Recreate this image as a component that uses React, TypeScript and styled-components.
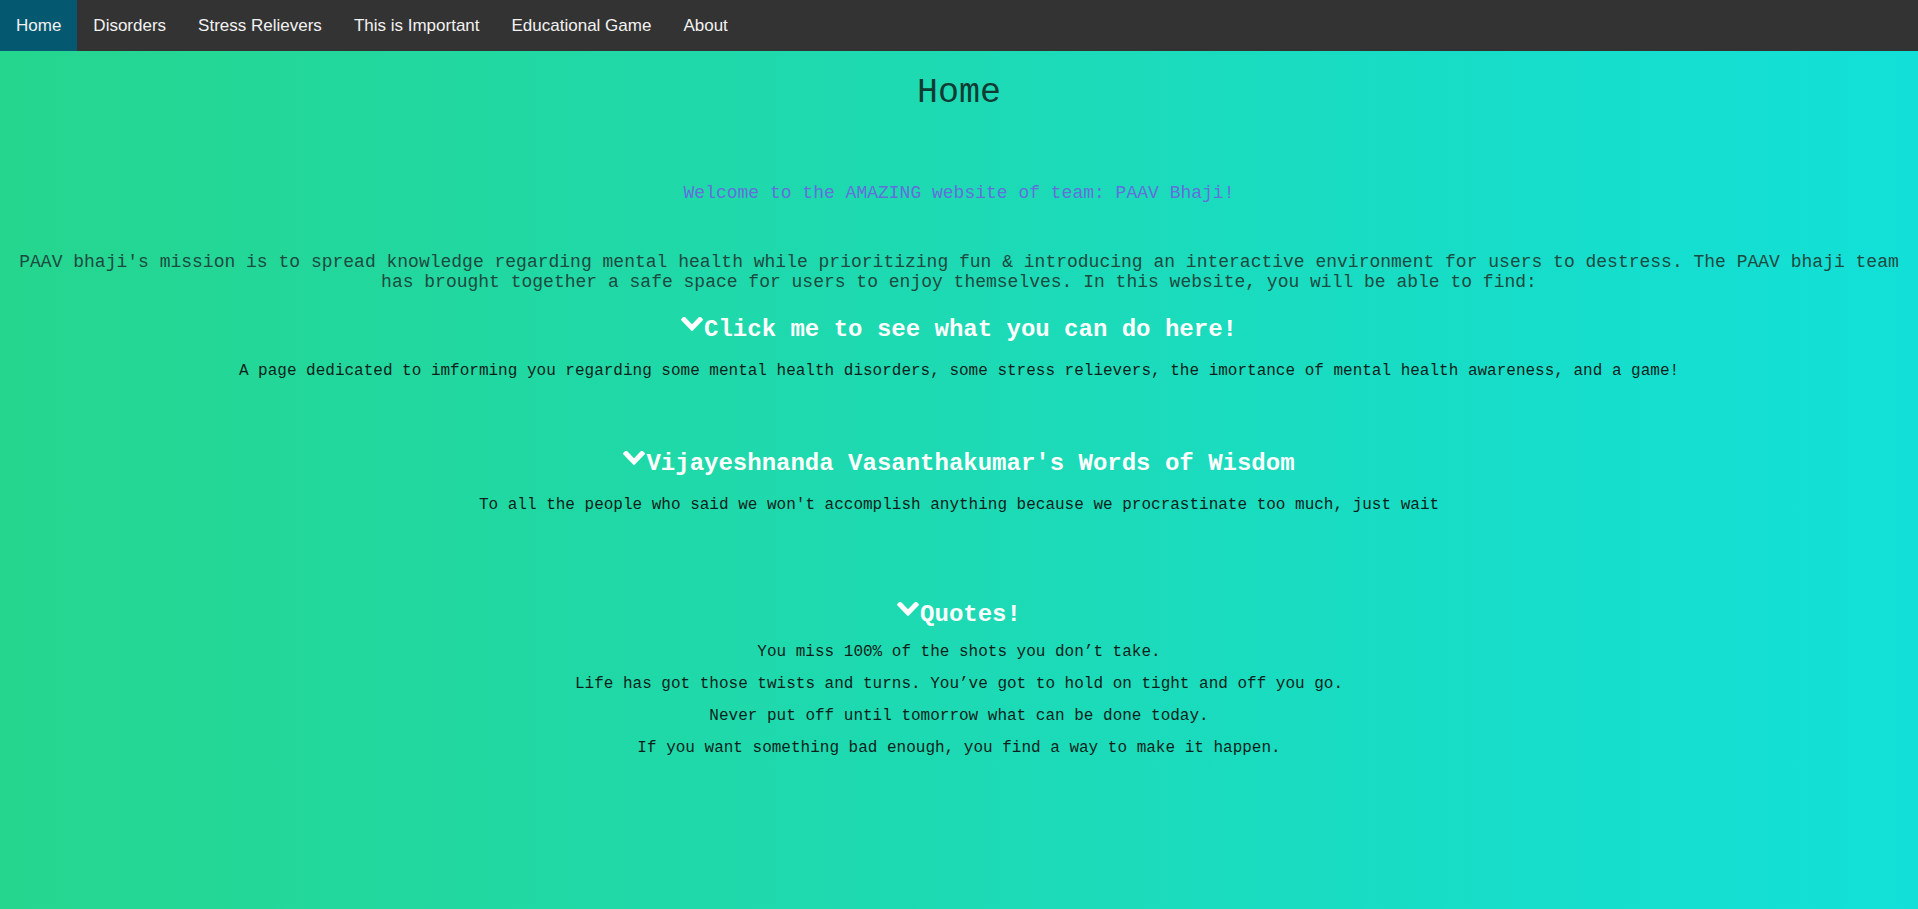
import React from "react";
import styled, { createGlobalStyle } from "styled-components";

const GlobalStyle = createGlobalStyle`
  html, body {
    margin: 0;
    padding: 0;
    min-height: 100%;
  }
  body {
    background: linear-gradient(to right, #25d68e 0%, #1ddab4 50%, #12e0d8 100%);
    min-height: 909px;
    font-family: "Liberation Mono", "Courier New", monospace;
  }
`;

const Page = styled.div`
  min-height: 909px;
  display: flex;
  flex-direction: column;
`;

const TopNav = styled.nav`
  display: flex;
  background: #333333;
  height: 51px;
`;

const NavLink = styled.a<{ $active?: boolean }>`
  display: block;
  padding: 0 16px;
  line-height: 51px;
  font-family: "Liberation Sans", Arial, sans-serif;
  font-size: 17px;
  color: #f2f2f2;
  text-decoration: none;
  background: ${(p) => (p.$active ? "#04586f" : "transparent")};
  cursor: pointer;
`;

const Main = styled.main`
  display: flex;
  flex-direction: column;
  align-items: center;
  text-align: center;
  padding: 0 8px;
`;

const Title = styled.h1`
  margin: 22px 0 0;
  font-weight: normal;
  font-size: 35px;
  line-height: 40px;
  color: #0f3b33;
`;

const Welcome = styled.p`
  margin: 70px 0 0;
  font-size: 18px;
  line-height: 20px;
  color: #636fdc;
`;

const Mission = styled.p`
  margin: 50px 0 0;
  font-size: 18px;
  line-height: 19.6px;
  color: #1d4a40;
`;

const Toggle = styled.button<{ $gap: number }>`
  display: flex;
  align-items: center;
  margin: ${(p) => p.$gap}px 0 0;
  padding: 0;
  border: none;
  background: none;
  font-family: "Liberation Mono", "Courier New", monospace;
  font-weight: bold;
  font-size: 24px;
  line-height: 28px;
  color: #ffffff;
  cursor: pointer;
`;

const Chevron = styled.svg`
  width: 22px;
  height: 14px;
  margin: -12px 1px 0 0;
  flex: none;
`;

const Body = styled.p<{ $gap: number }>`
  margin: ${(p) => p.$gap}px 0 0;
  font-size: 16px;
  line-height: 18px;
  color: #0d1f1a;
`;

const QuoteList = styled.div`
  display: flex;
  flex-direction: column;
  align-items: center;
  gap: 14px;
  margin-top: 14px;
`;

const Quote = styled.p`
  margin: 0;
  font-size: 16px;
  line-height: 18px;
  color: #0d1f1a;
`;

const ChevronIcon = () => (
  <Chevron viewBox="90 575 1612 1000" preserveAspectRatio="none">
    <path
      d="M1683 808l-742 741q-19 19-45 19t-45-19l-742-741q-19-19-19-45.5t19-44.5l166-165q19-19 45-19t45 19l531 531 531-531q19-19 45-19t45 19l166 165q19 18 19 44.5t-19 45.5z"
      fill="#ffffff"
    />
  </Chevron>
);

const navItems = [
  "Home",
  "Disorders",
  "Stress Relievers",
  "This is Important",
  "Educational Game",
  "About",
];

const quotes = [
  "You miss 100% of the shots you don’t take.",
  "Life has got those twists and turns. You’ve got to hold on tight and off you go.",
  "Never put off until tomorrow what can be done today.",
  "If you want something bad enough, you find a way to make it happen.",
];

export default function App() {
  return (
    <>
      <GlobalStyle />
      <Page>
        <TopNav>
          {navItems.map((item, i) => (
            <NavLink key={item} $active={i === 0}>
              {item}
            </NavLink>
          ))}
        </TopNav>
        <Main>
          <Title>Home</Title>
          <Welcome>Welcome to the AMAZING website of team: PAAV Bhaji!</Welcome>
          <Mission>
            PAAV bhaji's mission is to spread knowledge regarding mental health while
            prioritizing fun &amp; introducing an interactive environment for users to
            destress. The PAAV bhaji team has brought together a safe space for users to
            enjoy themselves. In this website, you will be able to find:
          </Mission>
          <Toggle $gap={24}>
            <ChevronIcon />
            Click me to see what you can do here!
          </Toggle>
          <Body $gap={18}>
            A page dedicated to imforming you regarding some mental health disorders, some
            stress relievers, the imortance of mental health awareness, and a game!
          </Body>
          <Toggle $gap={70}>
            <ChevronIcon />
            Vijayeshnanda Vasanthakumar's Words of Wisdom
          </Toggle>
          <Body $gap={18}>
            To all the people who said we won't accomplish anything because we
            procrastinate too much, just wait
          </Body>
          <Toggle $gap={87}>
            <ChevronIcon />
            Quotes!
          </Toggle>
          <QuoteList>
            {quotes.map((q) => (
              <Quote key={q}>{q}</Quote>
            ))}
          </QuoteList>
        </Main>
      </Page>
    </>
  );
}
